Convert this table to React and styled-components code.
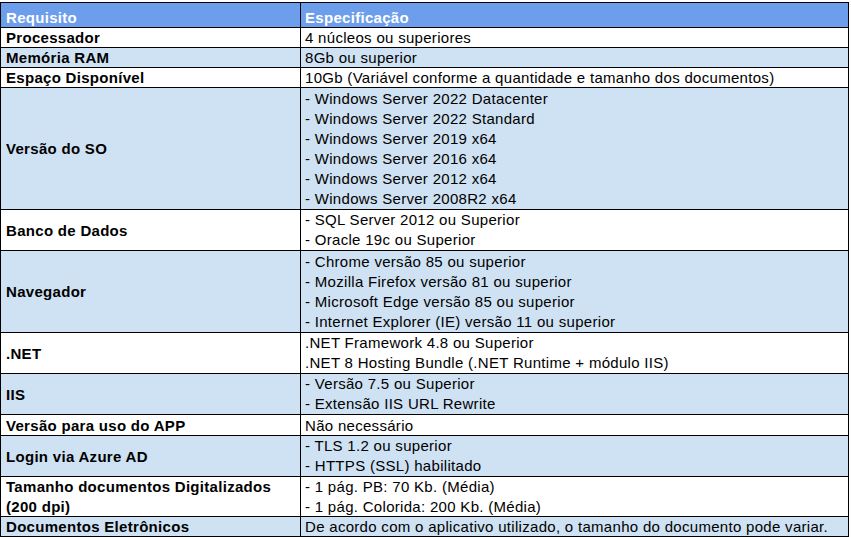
import React from 'react';
import styled, { createGlobalStyle } from 'styled-components';

const GlobalStyle = createGlobalStyle`
  html, body {
    margin: 0;
    padding: 0;
    background: #ffffff;
  }
  body {
    padding-top: 2px;
  }
`;

const Sheet = styled.table`
  border-collapse: collapse;
  table-layout: fixed;
  width: 848px;
  font-family: "Liberation Sans", Arial, sans-serif;
  font-size: 15px;
  letter-spacing: 0.3px;
  color: #000;
`;

const HeadCell = styled.th`
  background: #6d9eeb;
  color: #ffffff;
  font-weight: bold;
  text-align: left;
  vertical-align: bottom;
  border: 1px solid #000;
  padding: 6px 4px 0 ${(p) => (p.$first ? '5px' : '4px')};
  line-height: 18px;
  white-space: nowrap;
`;

const Row = styled.tr`
  background: ${(p) => (p.$shaded ? '#cfe2f3' : '#ffffff')};
`;

const Cell = styled.td`
  border: 1px solid #000;
  padding: 0 4px 0 ${(p) => (p.$label ? '5px' : '4px')};
  font-weight: ${(p) => (p.$label ? 'bold' : 'normal')};
  white-space: nowrap;
`;

const Stack = styled.div`
  display: flex;
  flex-direction: column;
  justify-content: center;
  height: ${(p) => p.$h}px;
`;

const Line = styled.div`
  line-height: ${(p) => (p.$single ? '19px' : '20px')};
  height: ${(p) => (p.$single ? '19px' : '20px')};
  flex: none;
`;

const rows = [
  { h: 19, label: ['Processador'], lines: ['4 núcleos ou superiores'] },
  { h: 19, label: ['Memória RAM'], lines: ['8Gb ou superior'] },
  { h: 19, label: ['Espaço Disponível'], lines: ['10Gb (Variável conforme a quantidade e tamanho dos documentos)'] },
  {
    h: 121,
    label: ['Versão do SO'],
    lines: [
      '- Windows Server 2022 Datacenter',
      '- Windows Server 2022 Standard',
      '- Windows Server 2019 x64',
      '- Windows Server 2016 x64',
      '- Windows Server 2012 x64',
      '- Windows Server 2008R2 x64',
    ],
  },
  { h: 40, label: ['Banco de Dados'], lines: ['- SQL Server 2012 ou Superior', '- Oracle 19c ou Superior'] },
  {
    h: 81,
    label: ['Navegador'],
    lines: [
      '- Chrome versão 85 ou superior',
      '- Mozilla Firefox versão 81 ou superior',
      '- Microsoft Edge versão 85 ou superior',
      '- Internet Explorer (IE) versão 11 ou superior',
    ],
  },
  { h: 40, label: ['.NET'], lines: ['.NET Framework 4.8 ou Superior', '.NET 8 Hosting Bundle (.NET Runtime + módulo IIS)'] },
  { h: 40, label: ['IIS'], lines: ['- Versão 7.5 ou Superior', '- Extensão IIS URL Rewrite'] },
  { h: 20, label: ['Versão para uso do APP'], lines: ['Não necessário'] },
  { h: 40, label: ['Login via Azure AD'], lines: ['- TLS 1.2 ou superior', '- HTTPS (SSL) habilitado'] },
  {
    h: 39,
    label: ['Tamanho documentos Digitalizados', '(200 dpi)'],
    lines: ['- 1 pág. PB: 70 Kb. (Média)', '- 1 pág. Colorida: 200 Kb. (Média)'],
  },
  {
    h: 19,
    label: ['Documentos Eletrônicos'],
    lines: ['De acordo com o aplicativo utilizado, o tamanho do documento pode variar.'],
  },
];

export default function App() {
  return (
    <>
      <GlobalStyle />
      <Sheet>
        <colgroup>
          <col style={{ width: 300 }} />
          <col style={{ width: 548 }} />
        </colgroup>
        <thead>
          <tr>
            <HeadCell $first>Requisito</HeadCell>
            <HeadCell>Especificação</HeadCell>
          </tr>
        </thead>
        <tbody>
          {rows.map((r, i) => (
            <Row key={r.label[0]} $shaded={i % 2 === 1}>
              <Cell $label>
                <Stack $h={r.h}>
                  {r.label.map((t) => (
                    <Line key={t} $single={r.label.length === 1}>
                      {t}
                    </Line>
                  ))}
                </Stack>
              </Cell>
              <Cell>
                <Stack $h={r.h}>
                  {r.lines.map((l) => (
                    <Line key={l} $single={r.lines.length === 1}>
                      {l}
                    </Line>
                  ))}
                </Stack>
              </Cell>
            </Row>
          ))}
        </tbody>
      </Sheet>
    </>
  );
}
